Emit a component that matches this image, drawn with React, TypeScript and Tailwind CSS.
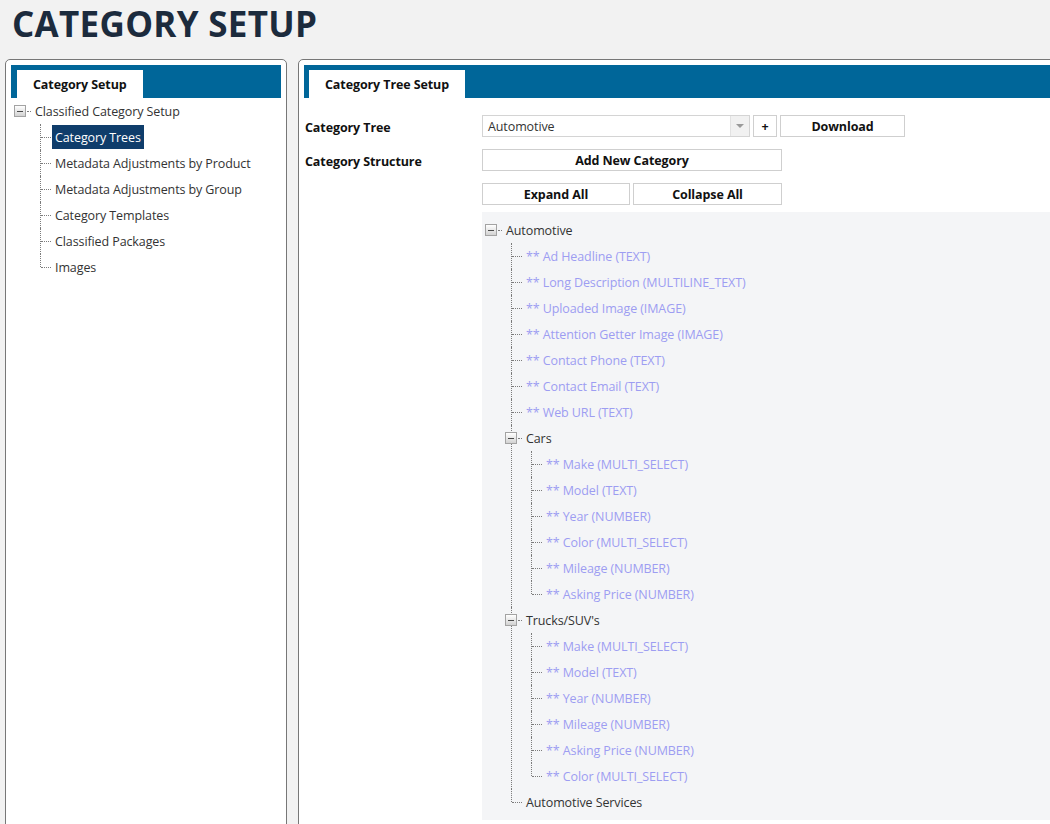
import React from "react";

type TreeNode = {
  label: string;
  field?: boolean;
  selected?: boolean;
  children?: TreeNode[];
};

const f = (label: string): TreeNode => ({ label: `** ${label}`, field: true });

const adminTree: TreeNode = {
  label: "Classified Category Setup",
  children: [
    { label: "Category Trees", selected: true },
    { label: "Metadata Adjustments by Product" },
    { label: "Metadata Adjustments by Group" },
    { label: "Category Templates" },
    { label: "Classified Packages" },
    { label: "Images" },
  ],
};

const categoryTree: TreeNode = {
  label: "Automotive",
  children: [
    f("Ad Headline (TEXT)"),
    f("Long Description (MULTILINE_TEXT)"),
    f("Uploaded Image (IMAGE)"),
    f("Attention Getter Image (IMAGE)"),
    f("Contact Phone (TEXT)"),
    f("Contact Email (TEXT)"),
    f("Web URL (TEXT)"),
    {
      label: "Cars",
      children: [
        f("Make (MULTI_SELECT)"),
        f("Model (TEXT)"),
        f("Year (NUMBER)"),
        f("Color (MULTI_SELECT)"),
        f("Mileage (NUMBER)"),
        f("Asking Price (NUMBER)"),
      ],
    },
    {
      label: "Trucks/SUV's",
      children: [
        f("Make (MULTI_SELECT)"),
        f("Model (TEXT)"),
        f("Year (NUMBER)"),
        f("Mileage (NUMBER)"),
        f("Asking Price (NUMBER)"),
        f("Color (MULTI_SELECT)"),
      ],
    },
    { label: "Automotive Services" },
  ],
};

function Expander() {
  return (
    <span className="relative -ml-[6px] flex h-[12px] w-[12px] shrink-0 items-center justify-center border border-[#a3a3a3] bg-gradient-to-b from-white to-[#d2d2d2]">
      <span className="h-px w-[6px] bg-[#4a4a4a]" />
    </span>
  );
}

function TreeItem({ node, last, root }: { node: TreeNode; last?: boolean; root?: boolean }) {
  const kids = node.children ?? [];
  const tone = node.selected
    ? "bg-[#0f3d6b] text-white"
    : node.field
      ? "text-[#9d9df2]"
      : "text-[#333]";

  return (
    <li className="relative">
      {/* connector from the parent */}
      {!root && (
        <span
          className={`absolute left-0 top-0 border-l border-dotted border-[#7c7c7c] ${
            last ? "h-[13px]" : "h-full"
          }`}
        />
      )}
      <div className="flex h-[26px] items-center">
        {kids.length > 0 ? (
          <>
            <Expander />
            <span className="ml-px w-[4px] border-t border-dotted border-[#7c7c7c]" />
          </>
        ) : (
          <span className="ml-px w-[10px] border-t border-dotted border-[#7c7c7c]" />
        )}
        <span className={`ml-px flex h-[24px] items-center whitespace-nowrap px-[3px] pt-[2px] ${tone}`}>
          {node.label}
        </span>
      </div>
      {kids.length > 0 && (
        <ul className="ml-[20px]">
          {kids.map((c, i) => (
            <TreeItem key={i} node={c} last={i === kids.length - 1} />
          ))}
        </ul>
      )}
    </li>
  );
}

function TabBar({ label, pad }: { label: string; pad: string }) {
  return (
    <div className={`flex h-[33px] items-end bg-[#006699] ${pad}`}>
      <div className="flex h-[28px] items-center bg-white px-[16px] pt-[2px] font-bold text-[#111]">
        {label}
      </div>
    </div>
  );
}

function Btn({ children, w }: { children: React.ReactNode; w: string }) {
  return (
    <button
      className={`flex h-[22px] items-center justify-center border border-[#cfcfcf] bg-white pt-px font-bold leading-[18px] text-[#111] ${w}`}
    >
      {children}
    </button>
  );
}

export default function App() {
  return (
    <div className="h-[824px] w-full overflow-hidden bg-[#f2f2f2] font-['Open_Sans','Noto_Sans',sans-serif] text-[12.5px] tracking-[-0.1px]">
      <h1 className="ml-[12px] mt-px text-[35px] font-bold leading-[46px] tracking-[0.3px] text-[#1c2b3d]">
        CATEGORY SETUP
      </h1>

      <div className="mt-[12px] flex gap-[11px] pl-[5px]">
        {/* Left: admin navigation */}
        <div className="w-[282px] shrink-0 rounded-t-[5px] border border-[#777] bg-white p-[5px]">
          <TabBar label="Category Setup" pad="pl-[6px]" />
          <ul className="pl-[9px]">
            <TreeItem node={adminTree} root />
          </ul>
        </div>

        {/* Right: category tree setup */}
        <div className="-mr-[40px] flex-1 rounded-t-[5px] border border-[#777] bg-white p-[5px] pb-[12px]">
          <TabBar label="Category Tree Setup" pad="pl-[5px]" />

          <div className="mt-[17px] flex h-[22px] items-center">
            <span className="w-[178px] pl-px pt-[4px] font-bold leading-[18px] text-[#111]">Category Tree</span>
            <div className="flex h-[22px] w-[268px] items-center border border-[#d4d4d4] bg-white">
              <span className="flex-1 pl-[5px] pt-px leading-[18px] text-[#333]">Automotive</span>
              <span className="flex h-full w-[19px] items-center justify-center border-l border-[#e2e2e2] bg-[#f1f1f1]">
                <span className="border-x-[4px] border-t-[4px] border-x-transparent border-t-[#9a9a9a]" />
              </span>
            </div>
            <div className="ml-[3px]">
              <Btn w="w-[24px]">+</Btn>
            </div>
            <div className="ml-[3px]">
              <Btn w="w-[125px]">Download</Btn>
            </div>
          </div>

          <div className="mt-[12px] flex h-[22px] items-center">
            <span className="w-[178px] pl-px pt-[4px] font-bold leading-[18px] text-[#111]">Category Structure</span>
            <Btn w="w-[300px]">Add New Category</Btn>
          </div>

          <div className="mt-[12px] flex h-[22px] gap-[3px] pl-[178px]">
            <Btn w="w-[148px]">Expand All</Btn>
            <Btn w="w-[149px]">Collapse All</Btn>
          </div>

          <div className="ml-[178px] mt-[7px] bg-[#f4f5f7] py-[5px] pl-[9px]">
            <ul>
              <TreeItem node={categoryTree} root />
            </ul>
          </div>
        </div>
      </div>
    </div>
  );
}
